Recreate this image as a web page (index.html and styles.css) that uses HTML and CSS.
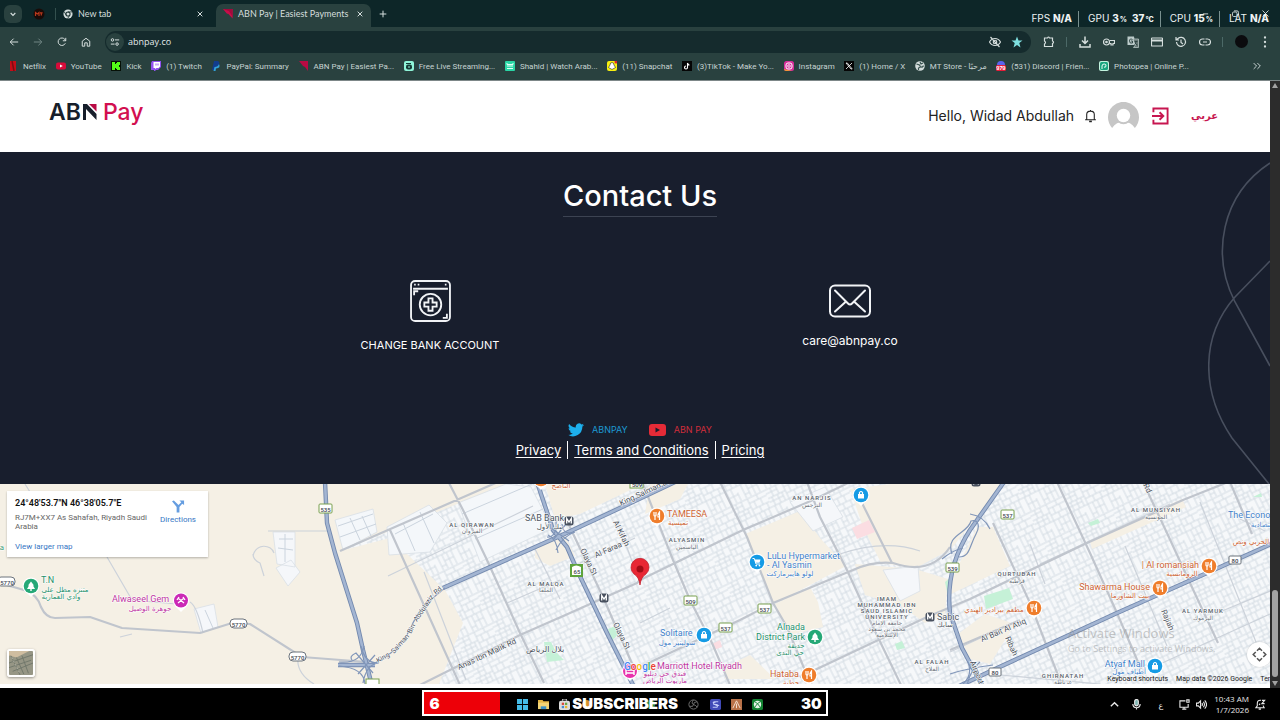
FILE: index.html
```html
<!DOCTYPE html>
<html lang="en">
<head>
<meta charset="utf-8">
<title>ABN Pay | Easiest Payments</title>
<meta name="viewport" content="width=device-width, initial-scale=1">
<link rel="stylesheet" href="styles.css">
</head>
<body>
<div class="browser">
  <div class="tabstrip">
    <button class="tab-search" aria-label="Search tabs"><svg class="ic" viewBox="0 0 24 24"><path d="M5 9l7 7 7-7" stroke-width="3.5"/></svg></button>
    <button class="pinned" aria-label="Pinned tab"><svg viewBox="0 0 12 12"><circle cx="6" cy="6" r="5.5" fill="#1a0b08"/><path d="M2.5 8V4.5L4.3 6 6 4.5V8M7 4.8h2.6M8.3 4.8V7.600" stroke="#b8391d" stroke-width="1.2" fill="none"/></svg></button>
    <div class="tab">
      <svg class="fav" viewBox="0 0 24 24"><circle cx="12" cy="12" r="11" fill="#d5dedd"/><circle cx="12" cy="12" r="5" fill="#d5dedd" stroke="#19302f" stroke-width="2.500"/><path d="M12 7h10M7.700 14.500L2.500 6M16.300 14.500L11 23" stroke="#19302f" stroke-width="2"/></svg>
      <span class="tab-title">New tab</span>
      <button class="tab-x" aria-label="Close tab"><svg class="ic" viewBox="0 0 24 24"><path d="M5 5l14 14M19 5L5 19" stroke-width="3"/></svg></button>
    </div>
    <div class="tab active">
      <svg class="fav" viewBox="0 0 24 24"><path d="M0 0h23v23L13 12 9 11z" fill="#c80d49"/><path d="M0 0l14 5 9 13V0z" fill="#a00a3c"/></svg>
      <span class="tab-title">ABN Pay | Easiest Payments</span>
      <button class="tab-x" aria-label="Close tab"><svg class="ic" viewBox="0 0 24 24"><path d="M5 5l14 14M19 5L5 19" stroke-width="3"/></svg></button>
    </div>
    <button class="new-tab" aria-label="New tab"><svg class="ic" viewBox="0 0 24 24"><path d="M12 2v20M2 12h20" stroke-width="3"/></svg></button>
    <div class="win-buttons">
      <button aria-label="Minimize"><svg class="ic" viewBox="0 0 24 24"><path d="M5 13h14"/></svg></button>
      <button aria-label="Restore"><svg class="ic" viewBox="0 0 24 24"><rect x="4" y="8" width="12" height="12" rx="3"/><path d="M8 5h8q4 0 4 4v7"/></svg></button>
      <button aria-label="Close"><svg class="ic" viewBox="0 0 24 24"><path d="M4 4l16 16M20 4L4 20"/></svg></button>
    </div>
    <div class="hud">
      <span>FPS <b>N/A</b></span><span>GPU <b>3<small>&thinsp;%</small></b> <b>&nbsp;37<small>&thinsp;°C</small></b></span><span>CPU <b>15<small>&thinsp;%</small></b></span><span>LAT <b>N/A</b></span>
    </div>
  </div>

  <div class="toolbar">
    <div class="nav-buttons">
      <button aria-label="Back"><svg class="ic" viewBox="0 0 24 24"><path d="M22 12H3M11 4l-8 8 8 8"/></svg></button>
      <button class="dim" aria-label="Forward"><svg class="ic" viewBox="0 0 24 24"><path d="M2 12h19M13 4l8 8-8 8"/></svg></button>
      <button aria-label="Reload"><svg class="ic" viewBox="0 0 24 24"><path d="M20 15a9 9 0 1 1-1-9l2 3M21 2v7h-7"/></svg></button>
      <button aria-label="Home"><svg class="ic" viewBox="0 0 24 24"><path d="M3 10l9-7 9 7v12h-6v-8H9v8H3z"/></svg></button>
    </div>
    <div class="address">
      <span class="site-info"><svg class="ic" viewBox="0 0 24 24"><circle cx="6" cy="7" r="3"/><path d="M12 7h10M2 17h9"/><circle cx="17" cy="17" r="3"/></svg></span>
      <input type="text" value="abnpay.co" aria-label="Address">
      <button aria-label="Tracking blocked"><svg class="ic" viewBox="0 0 24 24"><path d="M1 12q4-7 11-7t11 7q-4 7-11 7T1 12zM3 2l18 20"/><circle cx="12" cy="12" r="3.500"/></svg></button>
      <button aria-label="Bookmark"><svg viewBox="0 0 24 24"><path d="M12 1l3 8h8l-6.500 5 2.500 9-7-5-7 5 2.500-9L1 9h8z" fill="#7fe0e0"/></svg></button>
    </div>
    <div class="tool-buttons">
      <button aria-label="Extensions"><svg class="ic" viewBox="0 0 24 24"><path d="M3 4h6q2-4 4 0h6v6q4 2 0 5v6H3v-5q4-3 0-6z"/></svg></button>
      <i></i>
      <button aria-label="Downloads"><svg class="ic" viewBox="0 0 24 24"><path d="M12 1v14M6 9l6 6 6-6M2 16v6h20v-6" stroke-width="3"/></svg></button>
      <button aria-label="Passwords"><svg class="ic" viewBox="0 0 24 24"><circle cx="7" cy="12" r="6"/><circle cx="7" cy="12" r="1.500"/><path d="M13 9h10v6h-3v3h-4v-3h-3"/></svg></button>
      <button aria-label="Translate"><svg viewBox="0 0 24 24"><path d="M1 1h13l3 17H1z" fill="#bccbca"/><path d="M12 6h11v17H13l4-5z" fill="#657775" stroke="#bccbca" stroke-width="1.500"/><path d="M11 7q-6-3-6 3t6 4v-4H8M15 11h6M18 10q0 6-3 7M16 13q2 5 5 5" stroke="#29413f" stroke-width="1.800" fill="none"/></svg></button>
      <button aria-label="Payments"><svg class="ic" viewBox="0 0 24 24"><rect x="1" y="4" width="22" height="16" rx="1"/><path d="M1 9h22" stroke-width="4"/></svg></button>
      <button aria-label="History"><svg class="ic" viewBox="0 0 24 24"><path d="M3 12a9 9 0 1 0 3-7L2 8M2 2v6h6M12 7v6l4 3"/></svg></button>
      <button aria-label="Copy link"><svg class="ic" viewBox="0 0 24 24"><path d="M11 6H7a6 6 0 0 0 0 12h4M13 6h4a6 6 0 0 1 0 12h-4M8 12h8"/></svg></button>
      <i></i>
      <button aria-label="Profile"><span class="profile"></span></button>
      <button aria-label="Menu"><svg viewBox="0 0 24 24" fill="#d5dedd"><circle cx="12" cy="3" r="2.300"/><circle cx="12" cy="12" r="2.300"/><circle cx="12" cy="21" r="2.300"/></svg></button>
    </div>
  </div>

  <nav class="bookmarks" aria-label="Bookmarks">
    <div class="bookmark-list">
      <a href="#"><svg viewBox="0 0 10 10"><path d="M2 0h6v10H2z" fill="#c40d18"/><path d="M4 0l2 10" stroke="#7d0b12" stroke-width="1.500"/></svg>Netflix</a>
      <a href="#"><svg viewBox="0 0 10 10"><rect y="1.500" width="10" height="7" rx="2" fill="#d80b3a"/><path d="M4 3.500L6.800 5 4 6.500z" fill="#fff"/></svg>YouTube</a>
      <a href="#"><svg viewBox="0 0 10 10"><path d="M0 0h10v10H0z" fill="#061007"/><path d="M1 1h3v2h1V2h1V1h3v3H8v2h1v3H6V8H5V7H4v2H1z" fill="#53fc18"/></svg>Kick</a>
      <a href="#"><svg viewBox="0 0 10 10"><path d="M1 0h9v6L7 9H5l-1 1H3V9H0V2z" fill="#9250ef"/><path d="M2.500 1H9v4.500L7.500 7H5.500L4 8V7H2.500z" fill="#fff"/><path d="M5 2.500v2M7 2.500v2" stroke="#9250ef"/></svg>(1) Twitch</a>
      <a href="#"><svg viewBox="0 0 10 10"><path d="M3 0h4q2 1 1 4Q7 6 4 6L3.500 9H1z" fill="#123d8f"/><path d="M8 3q2 4-3 4.500L4.500 10H2.500L3.500 6Q7 6 8 3z" fill="#31a1dc"/></svg>PayPal: Summary</a>
      <a href="#"><svg viewBox="0 0 10 10"><path d="M0 0h9v10L6 6 4 5z" fill="#b80b43"/></svg>ABN Pay | Easiest Pa...</a>
      <a href="#"><svg viewBox="0 0 10 10"><rect width="10" height="10" rx="2" fill="#8ff5d9"/><rect x="2" y="3.500" width="6" height="5" rx="2" fill="#153a35"/><path d="M2 2.500h5M4 5.500h3" stroke="#153a35"/><path d="M4 6h2" stroke="#8ff5d9"/></svg>Free Live Streaming...</a>
      <a href="#"><svg viewBox="0 0 10 10"><rect width="10" height="10" rx="1" fill="#29d5a5"/><path d="M2 2v1.500h6V2M2 5h6M2 7.500h6" stroke="#e3fff7" fill="none"/></svg>Shahid | Watch Arab...</a>
      <a href="#"><svg viewBox="0 0 10 10"><rect width="10" height="10" rx="2" fill="#f8ef10"/><path d="M5 1.500q2 0 2 2.500l1.500 2.500L5 8.500 1.500 6.500 3 4q0-2.500 2-2.500z" fill="#fff" stroke="#222" stroke-width=".6"/><circle cx="9" cy="1" r="1.500" fill="#e3222b"/></svg>(11) Snapchat</a>
      <a href="#"><svg viewBox="0 0 10 10"><path d="M0 0h10v10H0z" fill="#050505"/><path d="M5.500 2v4.500a1.500 1.500 0 1 1-1.500-1.500M5.500 2q.5 2 2 2" stroke="#fff" stroke-width="1.100" fill="none"/></svg>(3)TikTok - Make Yo...</a>
      <a href="#"><svg viewBox="0 0 10 10"><rect width="10" height="10" rx="2.500" fill="#d62f9b"/><path d="M0 8l8 2H2q-2 0-2-2z" fill="#f49835"/><rect x="2" y="2" width="6" height="6" rx="2" fill="none" stroke="#fff"/><circle cx="5" cy="5" r="1.300" fill="none" stroke="#fff" stroke-width=".8"/></svg>Instagram</a>
      <a href="#"><svg viewBox="0 0 10 10"><path d="M0 0h10v10H0z" fill="#050505"/><path d="M2 2l5 6h1.200L3.300 2zM8 2L2 8" stroke="#fff" stroke-width=".8" fill="none"/></svg>(1) Home / X</a>
      <a href="#"><svg viewBox="0 0 10 10"><circle cx="5" cy="5" r="4.800" fill="#d3dcdb"/><path d="M1.500 3l3 1 1 2-2 1v2M5 1l1 2 2-1M9 5L7 5.500V7" stroke="#395350" stroke-width="1.200" fill="none"/></svg>MT Store - مرحبًا</a>
      <a href="#"><svg viewBox="0 0 10 10"><circle cx="5" cy="4" r="4" fill="#5963ed"/><rect y="4" width="10" height="6" rx="1.500" fill="#e51c38"/><text x="5" y="9" class="badge-number">979</text></svg>(531) Discord | Frien...</a>
      <a href="#"><svg viewBox="0 0 10 10"><rect width="10" height="10" rx="2" fill="#c2f4df"/><rect x="1" y="1" width="8" height="8" rx="1.500" fill="#18a47e"/><path d="M3 8V5q0-2 2.200-2T7 5 5 6" stroke="#effff9" fill="none"/></svg>Photopea | Online P...</a>
    </div>
    <button aria-label="More bookmarks"><svg class="ic" viewBox="0 0 24 24"><path d="M4 5l7 7-7 7M13 5l7 7-7 7"/></svg></button>
  </nav>
</div>

<div class="page">
  <header class="site-header">
    <a class="logo" href="#" aria-label="ABN Pay"><span class="logo-dark">AB</span><span class="logo-n"><svg viewBox="0 0 14 16"><path d="M0 0h4l9.500 10v6L3 5v11H0z" fill="#171e2b"/><path d="M6 0h7.500v7.500z" fill="#b90b45"/></svg></span><span class="logo-pink">Pay</span></a>
    <div class="account">
      <span>Hello, Widad Abdullah</span>
      <button class="bell" aria-label="Notifications"><svg viewBox="0 0 24 24" fill="none" stroke="#222" stroke-width="2"><path d="M2 19h20M5 18V9q0-6 7-6t7 6v9M12 1v2"/><path d="M9.500 22h5" stroke-width="3"/></svg></button>
      <svg class="avatar" viewBox="0 0 30 27" aria-label="Avatar"><path d="M4 25A15 15 0 1 1 26 25Q22 19 15 19T4 25z" fill="#c6c6c6"/><circle cx="15" cy="14" r="7.500" fill="#c6c6c6"/><circle cx="15" cy="13" r="6.500" fill="#fff"/></svg>
      <button class="logout" aria-label="Log out"><svg viewBox="0 0 18 18" fill="none" stroke="#c71650" stroke-width="2"><path d="M1.500 5V1h15v16h-15v-4M0 9h11.500M8 5l4 4-4 4"/></svg></button>
      <a class="lang" href="#" lang="ar">عربي</a>
    </div>
  </header>

  <main>
    <section class="contact">
      <svg class="curves" viewBox="0 0 72 332" preserveAspectRatio="none" fill="none" stroke="#484f5e" stroke-width="1.600"><path d="M62 11C13 43 3 103 27 150L62 214M62 109L27 145C-8 185-7 240 24 286L61 332"/></svg>
      <h1>Contact Us</h1>
      <div class="contact-options">
        <a class="option bank" href="#">
          <svg class="bank-icon" viewBox="0 0 40 41" fill="none" stroke="#f1f3f6" stroke-width="1.800"><rect x="1" y="1" width="38" height="39" rx="4"/><path d="M3 8.500h34M4 15v-4h4M36 33v4h-4"/><circle cx="20" cy="24" r="10.500"/><path d="M18 18h4v4h4v4h-4v4h-4v-4h-4v-4h4z"/><path d="M4 4.500h1.600M7.500 4.500h1.600M34 4.500h1.600" stroke-width="1.800"/></svg>
          <span>CHANGE BANK ACCOUNT</span>
        </a>
        <a class="option" href="#">
          <svg class="mail-icon" viewBox="0 0 42 33" fill="none" stroke="#f1f3f6" stroke-width="2" stroke-linecap="round"><rect x="1" y="1" width="40" height="31" rx="5"/><path d="M6 6l13 13q2 2 4 0L36 6M6 27l11-10M36 27L25 17"/></svg>
          <span>care@abnpay.co</span>
        </a>
      </div>
      <div class="social">
        <a class="twitter" href="#"><svg viewBox="0 0 24 20"><path d="M24 2.400a9 9 0 0 1-2.800.8A5 5 0 0 0 23.300.5a10 10 0 0 1-3.100 1.200 4.900 4.900 0 0 0-8.400 4.500A14 14 0 0 1 1.700 1a4.900 4.900 0 0 0 1.500 6.600A5 5 0 0 1 1 7a4.900 4.900 0 0 0 4 4.800 5 5 0 0 1-2.300.1 4.900 4.900 0 0 0 4.600 3.400A10 10 0 0 1 0 17.300 14 14 0 0 0 21.500 4.900 10 10 0 0 0 24 2.400z" fill="#1dafec"/></svg>ABNPAY</a>
        <a class="youtube" href="#"><svg viewBox="0 0 17 12"><rect width="17" height="12" rx="3" fill="#e52b37"/><path d="M6.500 3.500L11 6 6.500 8.500z" fill="#181e2d"/></svg>ABN PAY</a>
      </div>
      <div class="legal"><a href="#">Privacy</a><a href="#">Terms and Conditions</a><a href="#">Pricing</a></div>
    </section>

    <section class="map" aria-label="Map">
      <svg class="map-canvas" viewBox="0 0 1280 200" preserveAspectRatio="xMidYMid slice">
        <defs>
          <pattern id="blocks" width="38" height="34" patternUnits="userSpaceOnUse" patternTransform="rotate(-26)">
            <path d="M0 1h38M0 10h19M19 6h19M19 13h19M0 19h38M3 19v15M8 19v15M13 25v9M3 27h10M19 1v33M24 19v15M29 19v15M34 19v15M24 26h10M6 1v9M12 1v9M4 10v9M10 10v9M15 10v9M24 6v7M29 1v5M31 6v7M35 13v6M27 13v6M0 5h12M0 14h15M19 30h5" fill="none" stroke="#d0d9e1" stroke-width=".9"/>
          </pattern>
          <symbol id="food" viewBox="-9 -9 18 21"><path d="M0 11L-5 6h10z" fill="#fff"/><circle r="8.500" fill="#fff"/><circle r="7.300" fill="#ef7d2b"/><path d="M-3-4v3q0 1 1 1v4M-1-4v3q0 1-1 1M2.500 4v-8q-2 2-1.500 5h1.500" stroke="#fff" stroke-width="1.200" fill="none"/></symbol>
          <symbol id="shop" viewBox="-9 -9 18 21"><path d="M0 11L-5 6h10z" fill="#fff"/><circle r="8.500" fill="#fff"/><circle r="7.300" fill="#159be5"/><path d="M-3-1h6v4.500h-6z" fill="#fff"/><path d="M-1.500-1v-1.500q1.500-2 3 0V-1" stroke="#fff" stroke-width="1.200" fill="none"/></symbol>
          <symbol id="cart" viewBox="-9 -9 18 21"><path d="M0 11L-5 6h10z" fill="#fff"/><circle r="8.500" fill="#fff"/><circle r="7.300" fill="#159be5"/><path d="M-2.500-2.500h6L2.500.8h-4z" fill="#fff"/><path d="M-4.500-3.500h1.800L-1 2h4" stroke="#fff" fill="none"/><circle cx="-.8" cy="3.600" r=".9" fill="#fff"/><circle cx="2.500" cy="3.600" r=".9" fill="#fff"/></symbol>
          <symbol id="park" viewBox="-9 -9 18 21"><path d="M0 11L-5 6h10z" fill="#fff"/><circle r="8.500" fill="#fff"/><circle r="7.300" fill="#25a877"/><path d="M0-4.500L3-.5H2l2 3.500H.7v2H-.7V3H-4l2-3.500h-1z" fill="#fff"/></symbol>
          <symbol id="metro" viewBox="-5 -5 10 10"><rect x="-4.500" y="-4.500" width="9" height="9" rx="2.500" fill="#49515f"/><path d="M-2.300 2.500v-5L0 1l2.300-3.500v5" fill="none" stroke="#fff" stroke-width="1.300"/></symbol>
        </defs>
        <rect width="1280" height="200" fill="#f6f8fa"/>
        <rect x="330" width="950" height="200" fill="url(#blocks)"/>
        <g fill="#f5f0e5">
          <path d="M0 0h507L340 67l50-13 55 52 18 33-24 61H0z"/>
          <path d="M0 0h322l5 60 38 140H0z"/>
          <path d="M545 0h98L580 30l-25 5zM535 62l30-10 10 20-25 10-15-8z"/>
          <path d="M745 50l55-23 20 27 26 28-72 38-20-48z"/>
          <path d="M850 5l40-5h113l-52 65-35 19-35-5-18-36z"/>
          <path d="M855 80l60 5 33 10-3 35-20 9-25-18-35-10z"/>
          <path d="M775 120l35-17 8 15 5 25-34 8zM725 183l25-12 25 24H725zM952 95l25-52 16 0 17 39-59 28zM985 130l30 10-25 40-20-5-12-25z"/>
          <path d="M1090 57l92-42 4 8-94 42zM650 0h38l-8 15-35 15z"/>
        </g>
        <g fill="#f5f7fa" stroke="#d9dfe6" stroke-width=".8">
          <path d="M335 36l38-11 4 23-34 18zM387 43l42-22 18 18-17 29-41 3zM458 19l48-19 25 3 21 41-72 34z" fill="#f4f7fa"/>
          <path d="M273 48h22v35l-18-3zM276 84l15-8 9 12-12 14zM194 125l20-5 4 23-17 6z"/>
          <path d="M883 86l35-4 2 25-20 10zM790 18l35-15 18 30-30 14z"/>
        </g>
        <path d="M338 42l35-12M350 34l10 22M362 32l9 20M340 53l36-13M395 50l38-20M403 39l12 28M420 28l14 31M279 55h14M278 64l15 2M285 50v28M462 30l70-30M475 55l68-30M205 126l8 18" fill="none" stroke="#cbd4de"/>
        <g fill="#c5f1d7"><path d="M984 112l25-8 4 11-27 10z"/><path d="M608 145l7-3 3 9-7 6zM544 158l7 0 5 10 8 8-17 2zM895 160l7-3 3 7-8 2zM945 98l6-5-2 24zM1088 39l10-4 2 4-9 3zM1253 13l8-4 1 4z"/></g>
        <path d="M852 44l17-8 6 12-18 7zM712 160l8-4 2 7-8 3z" fill="#fbdde2"/>

        <g class="road minor">
          <path d="M25 0l5 8M107 73l25 43 55 5M190 118q7 4 13 31M268 47h62M253 72c3-13 18-12 21-3M264 92l-4-13q-7-3-7-9M298 173q-2 16 16 27M132 150l-12 3"/>
          <path d="M388 92l145-70M424 88l42 108M507 119l53-23M535 65l25 50M640 139l30-15M840 70q45-15 80-3M1020 136l-70 32M1160 180l110-50M1125 62l42 100M1200 18l60 150M990 190l110 10"/>
          <path d="M580 79l55-25M620 45l15 40M1040 80l130-60M1030 60l15 40M1215 130l60-25M1240 35l25 12"/>
        </g>
        <g class="road medium">
          <path d="M0 99l24 7q13 4 17 17 5 11 14 11l35-1 32 11 78 5 32-10 18 1 52 33 65 5"/>
          <path d="M340 67L507-6M390 46l70 155M447-5l16 31 24 50 33 73 24 50M568 39l35 74 30 69M420 201l100-50 50-22 67-30 3-3 103-50 70-30L850-2M643 0l30 76 17 40 22 43 18 42M720-2l27 55 26 66 14 24 24 58M640 183l100-47 33-17 80-33q20-9 40-7 38 13 57-16M807-2l13 35 27 53 26 57 28 58M855 5l37 74M800 193l127-60 43-18 117-56 96-43 45-18M993 39l37 80 31 80M1057-2l33 71 27 60 24 56M1143-2l24 51 23 50 28 60M1230-2l22 52M950 166l70-30"/>
        </g>
        <g class="road major-edge"><path d="M325-2l2 41 8 30 22 70 6 27 9 36M443 104l117-52 60-28 55-26M537-2l16 48 14 17 10 23 30 63 27 54M1004-2L970 46q-25 39-20 83l12 35 21 39M955 204l38-18 124-57 90-40 73-33M338 181h37"/></g>
        <g class="road major"><path d="M325-2l2 41 8 30 22 70 6 27 9 36M443 104l117-52 60-28 55-26M537-2l16 48 14 17 10 23 30 63 27 54M1004-2L970 46q-25 39-20 83l12 35 21 39M955 204l38-18 124-57 90-40 73-33M338 181h37"/></g>
        <g class="interchange"><path d="M375 179Q400 166 409 147T424 122 445 104M339 178q22 2 25-16M339 182q25 2 26 18M361 162q4 18 18 17M363 199q3-18 15-20M352 176q-3-4 4-7l17 20M358 190l17-19M547 53q10 1 9-17M548 51q9 4 10 18M562 40q1 12 13 8M556 66q7-14 19-18M553 56l13-16M551 44l18 13M952 70c-7-20 16-20 19-33 8-2 9 6 5 13-7 13-6 23-17 23M970 30q14 2 20 15M942 75q11-9 21-11M968 178q5 13-5 22M980 178q-9 7-13 23M950 190q18-6 43-9"/></g>

        <g class="shield">
          <g fill="#fff" stroke="#79a04f"><rect x="319" y="20" width="13" height="9" rx="1"/><rect x="684" y="112" width="13" height="9" rx="1"/><rect x="758" y="120" width="13" height="9" rx="1"/><rect x="719" y="139" width="13" height="9" rx="1"/><rect x="946" y="79" width="13" height="9" rx="1"/><rect x="1001" y="26" width="13" height="9" rx="1"/><rect x="366" y="195" width="13" height="9"/><rect x="630" y="-5" width="13" height="9"/></g>
          <rect x="570" y="80" width="13" height="13" fill="#5ea33c"/><path d="M572 83q4-3 9 0v8h-9z" fill="#fff"/>
          <g fill="#fff" stroke="#6c747d"><rect x="-3" y="93" width="18" height="9" rx="4"/><rect x="230" y="135" width="17" height="9" rx="4"/><rect x="289" y="168" width="17" height="9" rx="4"/><rect x="1229" y="72" width="12" height="8" rx="1"/><rect x="989" y="184" width="12" height="8" rx="1"/></g>
          <text x="325.500" y="28">535</text><text x="690.500" y="120">509</text><text x="764.500" y="128">537</text><text x="725.500" y="147">537</text><text x="952.500" y="87">539</text><text x="1007.500" y="34">537</text><text x="577" y="90">65</text><text x="7" y="101">5770</text><text x="238.500" y="143">5770</text><text x="297.500" y="176">5770</text><text x="1235" y="79">80</text><text x="995" y="191">80</text><text x="637" y="3">509</text>
        </g>

        <g class="district">
          <text x="472" y="43">AL QIRAWAN</text><text x="546" y="102">AL MALQA</text><text x="687" y="58">ALYASMIN</text><text x="812" y="16">AN NARJIS</text><text x="1017" y="92">QURTUBAH</text><text x="1156" y="28">AL MUNSIYAH</text><text x="1203" y="129">AL YARMUK</text><text x="932" y="180">AL FALAH</text><text x="1063" y="194">GHIRNATAH</text>
          <text x="887" y="117">IMAM</text><text x="887" y="123">MUHAMMAD IBN</text><text x="887" y="129">SAUD ISLAMIC</text><text x="887" y="135">UNIVERSITY</text>
        </g>
        <g class="district-ar" lang="ar">
          <text x="472" y="49">القيروان</text><text x="546" y="108">الملقا</text><text x="687" y="65">الياسمين</text><text x="812" y="23">النرجس</text><text x="1017" y="99">قرطبة</text><text x="1156" y="35">المونسية</text><text x="1203" y="136">اليرموك</text><text x="932" y="187">الفلاح</text><text x="1063" y="200">غرناطة</text><text x="887" y="141">جامعة الإمام</text><text x="887" y="147">محمد بن سعود</text><text x="887" y="153">الإسلامية</text>
        </g>
        <g class="street bend">
          <text transform="translate(378 179) rotate(-30)">King</text><text transform="translate(394 170) rotate(-48)">Salman</text><text transform="translate(411 150) rotate(-62)">Bin</text><text transform="translate(417 138) rotate(-56)">Abdulaziz</text><text transform="translate(436 111) rotate(-40)">Rd</text>
        </g>
        <g class="street">
          <text transform="translate(459 186) rotate(-25)">Anas Ibn Malik Rd</text><text transform="translate(596 74) rotate(-24)">Al Faraa</text><text transform="translate(613 38) rotate(64)">Al Kifah</text><text transform="translate(580 66) rotate(64)">Olaya St</text><text transform="translate(613 140) rotate(64)">Olaya St</text><text transform="translate(621 22) rotate(-25)">King Salman Bin Abdulaziz</text><text transform="translate(982 158) rotate(-23)">Al Bait Al Atiq</text><text transform="translate(1005 154) rotate(66)">Ribah</text><text transform="translate(1161 127) rotate(67)">Rajiah</text><text transform="translate(970 178) rotate(68)">Airport Rd</text><text transform="translate(1143 1) rotate(64)">Rd</text><text x="526" y="168">بلال الرياض</text>
        </g>
        <use href="#metro" x="564" y="32" width="10" height="10"/><use href="#metro" x="599" y="109" width="10" height="10"/><use href="#metro" x="925" y="128" width="10" height="10"/><use href="#metro" x="971" y="-7" width="10" height="10"/>
        <use href="#food" x="532" y="-14" width="18" height="21"/><use href="#food" x="648" y="23" width="18" height="21"/><use href="#food" x="1200" y="73" width="18" height="21"/><use href="#food" x="1151" y="95" width="18" height="21"/><use href="#food" x="1025" y="115" width="18" height="21"/><use href="#food" x="800" y="182" width="18" height="21"/>
        <use href="#shop" x="852" y="2" width="18" height="21"/><use href="#cart" x="748" y="69" width="18" height="21"/><use href="#shop" x="695" y="142" width="18" height="21"/><use href="#shop" x="1146" y="173" width="18" height="21"/>
        <use href="#park" x="22" y="93" width="18" height="21"/><use href="#park" x="806" y="144" width="18" height="21"/>
        <g><path d="M181 128l-5-5h10z" fill="#fff"/><circle cx="181" cy="116.500" r="8" fill="#fff"/><circle cx="181" cy="116.500" r="7" fill="#cb29b6"/><path d="M178 114l6 5M184 114l-6 5M177 116l2-3M185 116l-2-3" stroke="#fff" stroke-width="1.300"/><path d="M630 197l-5-5h10z" fill="#fff"/><circle cx="630" cy="187" r="8" fill="#fff"/><circle cx="630" cy="187" r="7" fill="#e831ac"/><path d="M626 184v7M626 189h8v2M628 186h6v3" stroke="#fff" stroke-width="1.400" fill="none"/></g>
        <g class="poi">
          <text class="green" x="41" y="99">T.N</text><text class="pink" x="112" y="118">Alwaseel Gem</text><text class="dark" x="525" y="37">SAB Bank</text><text class="orange" x="667" y="33">TAMEESA</text><text class="blue" x="767" y="75">LuLu Hypermarket</text><text class="blue" x="767" y="84">- Al Yasmin</text><text class="blue" x="660" y="152">Solitaire</text><text class="green end" x="805" y="146">Alnada</text><text class="green end" x="805" y="156">District Park</text><text class="orange end" x="799" y="193">Hataba</text><text class="pink" x="657" y="185">Marriott Hotel Riyadh</text><text class="orange end" x="1199" y="84">| Al romansiah</text><text class="orange end" x="1150" y="106">Shawarma House</text><text class="dark" x="937" y="136">Sabic</text><text class="blue end" x="1145" y="183">Atyaf Mall</text><text class="blue" x="1228" y="34">The Economist</text>
        </g>
        <g class="poi-ar" lang="ar">
          <text class="green" x="65" y="108">متنزه مطل على</text><text class="green" x="61" y="115">وادي العمارية</text><text class="pink" x="150" y="127">جوهرة الوصيل</text><text class="dark" x="550" y="45">بنك الأول</text><text class="orange" x="678" y="41">تميسية</text><text class="blue" x="790" y="92">لولو هايبرماركت</text><text class="blue" x="677" y="161">سوليتير مول</text><text class="green" x="796" y="164">حديقة</text><text class="green" x="790" y="171">حي الندى</text><text class="orange" x="791" y="201">حطبة</text><text class="pink" x="665" y="192">فندق حي دبليو</text><text class="pink" x="665" y="199">ماريوت الرياض</text><text class="orange" x="1182" y="92">الرومانسية</text><text class="orange" x="1130" y="114">بيت الشاورما</text><text class="orange" x="994" y="128">مطعم بيرادير الهندي</text><text class="dark" x="945" y="143">سابك</text><text class="blue" x="1129" y="190">أطياف مول</text><text class="orange" x="1251" y="60">الحربي ونص</text><text class="blue" x="1265" y="43">الاقتصادية</text><text class="orange" x="561" y="4">الناصح</text><text class="green" x="2" y="66">a</text>
        </g>
        <path d="M640 101q-1-8-6-11a9 9 0 1 1 12 0q-5 3-6 11z" fill="#e82734" stroke="#bd1a26" stroke-width=".7"/><circle cx="640" cy="85" r="3.500" fill="#a10d16"/>
        <text class="google" x="624" y="186"><tspan fill="#4285f4">G</tspan><tspan fill="#ea4335">o</tspan><tspan fill="#fbbc04">o</tspan><tspan fill="#4285f4">g</tspan><tspan fill="#34a853">l</tspan><tspan fill="#ea4335">e</tspan></text>
      </svg>

      <div class="map-card">
        <div class="place">
          <h2>24°48'53.7"N 46°38'05.7"E</h2>
          <p>RJ7M+XX7 As Sahafah, Riyadh Saudi Arabia</p>
          <a href="#">View larger map</a>
        </div>
        <a class="directions" href="#"><svg viewBox="0 0 14 14"><path d="M5 14V8L0 2l2-1 5 5 3-3-2-2h5v5l-2-1.500L8 8v6z" fill="#659de0"/></svg>Directions</a>
      </div>
      <button class="satellite" aria-label="Satellite view"><svg viewBox="0 0 26 26"><path d="M0 0h26v26H0z" fill="#969685"/><path d="M0 0h22L8 7 0 5z" fill="#cfbda0"/><path d="M2 5l10 21M0 13l26-9M4 22l22-9M14 5l7 19M8 7l8 18M0 18l24-8" stroke="#70766a" fill="none"/><path d="M3 7l9 18" stroke="#b5b5a8" stroke-dasharray="2 2"/></svg></button>
      <button class="pan" aria-label="Map camera controls"><svg class="ic" viewBox="0 0 24 24"><path d="M8 6l4-4 4 4M8 18l4 4 4-4M6 8l-4 4 4 4M18 8l4 4-4 4" stroke-width="2.500"/></svg></button>
      <div class="map-credits"><button>Keyboard shortcuts</button><span>Map data ©2026 Google</span><a href="#">Terms</a></div>
      <div class="watermark"><span>Activate Windows</span><small>Go to Settings to activate Windows.</small></div>
    </section>
  </main>
  <div class="scrollbar" aria-hidden="true"><svg viewBox="0 0 10 10"><path d="M5 2l3 5H2z"/></svg><span></span><svg viewBox="0 0 10 10"><path d="M5 8L2 3h6z"/></svg></div>
</div>

<footer class="taskbar">
  <div class="apps">
    <svg viewBox="0 0 12 12"><path d="M0 0h5.500v5.500H0zM6.500 0H12v5.500H6.500zM0 6.500h5.500V12H0zM6.500 6.500H12V12H6.500z" fill="#45bce8"/></svg>
    <svg viewBox="0 0 12 12"><path d="M0 1h5l1 1.500h6V11H0z" fill="#e6b744"/><path d="M0 4h12v7H0z" fill="#f4d576"/><path d="M3 8h6v3H3z" fill="#3c91c8"/></svg>
    <svg viewBox="0 0 12 12"><rect y="2" width="12" height="10" rx="2" fill="#ddd"/><path d="M4 2V0h4v2" stroke="#ddd" fill="none"/><path d="M3 4h2.500v2.500H3z" fill="#d94738"/><path d="M6.500 4H9v2.500H6.500z" fill="#6aa840"/><path d="M3 7.500h2.500V10H3z" fill="#458bd0"/><path d="M6.500 7.500H9V10H6.500z" fill="#e8b72d"/></svg>
    <svg viewBox="0 0 12 12"><circle cx="6" cy="6" r="5" fill="#d9902b"/></svg>
    <svg viewBox="0 0 12 12"></svg><svg viewBox="0 0 12 12"></svg>
    <svg viewBox="0 0 12 12"><circle cx="6" cy="6" r="5" fill="#26813e"/></svg><svg viewBox="0 0 12 12"></svg>
    <svg viewBox="0 0 12 12" fill="none" stroke="#777"><circle cx="6" cy="6" r="5"/><path d="M6 1q-3 4 0 5t4 3M2 8q4 1 4-2t4-3"/></svg>
    <svg viewBox="0 0 12 12"><rect width="12" height="12" rx="2" fill="#4049b7"/><path d="M9 3H4v3h4v3H3M3 4h3M6 7h4" stroke="#cdd4ff" fill="none"/></svg>
    <svg viewBox="0 0 12 12"><path d="M0 0h12v12H0z" fill="#b97148"/><path d="M2 10l4-8 4 8M6 5v5" stroke="#f7e5d8" fill="none"/></svg>
    <svg viewBox="0 0 12 12"><rect width="12" height="12" rx="2" fill="#138332"/><circle cx="6" cy="6" r="4" fill="#e6f4e8"/><path d="M3 3q3 1 6 6M9 3Q6 4 3 9" stroke="#138332" fill="none"/></svg>
  </div>
  <div class="goal"><span class="goal-current">6</span><span class="goal-label">SUBSCRIBERS</span><span class="goal-target">30</span></div>
  <div class="tray">
    <button class="more" aria-label="Hidden icons"><svg class="ic" viewBox="0 0 24 24"><path d="M4 16l8-8 8 8" stroke-width="3"/></svg></button>
    <button aria-label="Microphone"><svg class="ic" viewBox="0 0 24 24"><rect x="8" y="1" width="8" height="14" rx="4" fill="#7fb5b2"/><path d="M4 11q0 8 8 8t8-8M12 19v4"/></svg></button>
    <button class="ime" aria-label="Input language">ع</button>
    <button aria-label="Display"><svg class="ic" viewBox="0 0 24 24"><path d="M14 4H2v14h18v-7M7 22h9M11 18v4M17 2h5v5h-5z"/></svg></button>
    <button aria-label="Volume"><svg class="ic" viewBox="0 0 24 24"><path d="M1 9h4l5-5v16l-5-5H1zM13 9q2 3 0 6M16 6q5 6 0 12M19 3q8 9 0 18"/></svg></button>
    <time>10:43 AM<br>1/7/2026</time>
    <button aria-label="Notifications"><svg class="ic" viewBox="0 0 24 24"><path d="M13 3q-8-1-8 7v5l-3 4h18l-2-4v-1M8 22h5M15 3h6l-6 7h6M9 13l2-3"/></svg></button>
  </div>
</footer>
</body>
</html>
```

FILE: styles.css
```css
* { box-sizing: border-box; }
body {
  margin: 0;
  min-height: 100vh;
  display: flex;
  flex-direction: column;
  background: #000;
  font-family: Inter, "DejaVu Sans", sans-serif;
  overflow-x: hidden;
}
button { border: 0; padding: 0; background: none; color: inherit; font: inherit; display: flex; align-items: center; justify-content: center; }
a { color: inherit; text-decoration: none; }
svg { display: block; flex: none; }
.ic { fill: none; stroke: currentColor; stroke-width: 2.4; }

/* browser window */
.browser { color: #d5dedd; background: #29413f; font-family: Lato, "DejaVu Sans", sans-serif; font-size: 9px; border-bottom: 1px solid #7d8788; }
.tabstrip { position: relative; display: flex; align-items: center; height: 27px; padding-left: 4px; background: #0d2628; }
.tab-search { width: 18px; height: 18px; border-radius: 6px; background: #29413f; }
.tab-search svg { width: 8px; height: 8px; }
.pinned { width: 34px; height: 12px; border-right: 1px solid #34504e; }
.pinned svg { width: 12px; height: 12px; }
.tab { display: flex; align-items: center; gap: 5px; width: 155px; height: 23px; padding: 0 7px; }
.fav { width: 10px; height: 10px; }
.tab-title { flex: 1; white-space: nowrap; }
.tab-x svg { width: 8px; height: 8px; }
.tab.active { margin-left: 5px; align-self: flex-end; padding-bottom: 4px; border-radius: 7px 7px 0 0; background: #29413f; }
.new-tab { width: 24px; }
.new-tab svg { width: 8px; height: 8px; }
.win-buttons { display: flex; margin-left: auto; }
.win-buttons button { width: 30px; height: 26px; }
.win-buttons svg { width: 9px; height: 9px; }
.hud { position: absolute; top: 11px; right: 11px; display: flex; font: 10px/14px Inter, sans-serif; color: #eef3f3; white-space: nowrap; }
.hud span { padding: 0 6px 0 9px; border-right: 1px solid #79908f; }
.hud span:last-child { padding-right: 0; border-right: 0; }
.hud b { font-weight: 800; }
.hud small { font-size: 7px; }

.toolbar { display: flex; align-items: center; height: 29px; padding: 0 3px 0 2px; }
.toolbar button { width: 24px; height: 22px; flex: none; }
.toolbar button svg { width: 12px; height: 12px; }
.toolbar .nav-buttons svg { width: 10px; height: 10px; }
.nav-buttons, .tool-buttons { display: flex; align-items: center; }
.dim { color: #718684; }
.address { flex: 1; display: flex; align-items: center; height: 22px; margin: 0 6px 0 7px; padding: 0 4px 0 1px; border-radius: 11px; background: #152b2d; }
.site-info { display: grid; place-items: center; width: 18px; height: 18px; border-radius: 50%; background: #29413f; }
.site-info svg { width: 10px; height: 10px; }
.address input { flex: 1; min-width: 0; border: 0; outline: 0; padding: 0 4px; background: none; color: #e3eaea; font: 9px "Open Sans", sans-serif; }
.address button:last-child { width: 20px; }
.tool-buttons i { width: 1px; height: 10px; margin: 0 6px 0 5px; background: #4c6967; }
.profile { width: 13px; height: 13px; border-radius: 50%; background: #0b0b0e; }

.bookmarks { display: flex; justify-content: space-between; height: 24px; padding: 0 18px 4px 8px; align-items: center; font-family: Roboto, "DejaVu Sans", sans-serif; font-size: 8px; color: #c7d3d2; }
.bookmark-list { flex: 1; max-width: 1181px; display: flex; justify-content: space-between; }
.bookmark-list a { display: flex; align-items: center; gap: 5px; white-space: nowrap; }
.bookmark-list svg { width: 10px; height: 10px; }
.badge-number { font: 700 5px Inter, sans-serif; fill: #fff; text-anchor: middle; }
.bookmarks button svg { width: 10px; height: 10px; }

/* site */
.page { position: relative; flex: 1; display: flex; flex-direction: column; padding-bottom: 4px; background: #fff; }
.site-header { display: flex; align-items: center; justify-content: space-between; height: 71px; padding: 0 62px 2px 49px; background: #fff; }
.logo { display: flex; align-items: baseline; font-size: 23px; line-height: 32px; margin-bottom: 8px; }
.logo-dark { color: #171e2b; font-weight: 600; }
.logo-n { margin-left: 2px; }
.logo-n svg { width: 14px; height: 16px; }
.logo-pink { margin-left: 6px; color: #d20f50; font-weight: 500; }
.account { display: flex; align-items: center; color: #222; font-size: 14px; white-space: nowrap; }
.bell { margin: 0 11px 0 10px; }
.bell svg { width: 13px; height: 14px; }
.avatar { width: 31px; height: 28px; }
.logout { margin: 0 22px 0 13px; }
.logout svg { width: 17px; height: 18px; }
.lang { color: #c71650; font: 700 10px "DejaVu Sans", sans-serif; }
main { flex: 1; display: flex; flex-direction: column; }

.contact { position: relative; flex: 1; display: flex; flex-direction: column; align-items: center; padding: 24px 20px 20px; background: #181e2d; color: #fff; }
.curves { position: absolute; top: 0; right: 0; width: 72px; height: 100%; }
.contact h1 { margin: 0 0 63px; border-bottom: 1px solid #3c4352; font-size: 29px; line-height: 40px; font-weight: 500; }
.contact-options { width: 100%; max-width: 840px; display: grid; grid-template-columns: 1fr 1fr; align-items: center; }
.option { display: flex; flex-direction: column; align-items: center; gap: 14px; font-size: 12px; line-height: 18px; }
.bank { font-size: 11px; }
.bank-icon { width: 41px; height: 42px; }
.mail-icon { width: 42px; height: 34px; }
.social { display: flex; gap: 21px; margin-top: auto; font-size: 9px; line-height: 16px; }
.social a { display: flex; align-items: center; gap: 8px; }
.twitter { color: #1d99d2; }
.twitter svg { width: 16px; height: 14px; }
.youtube { color: #cf2d3b; }
.youtube svg { width: 17px; height: 12px; }
.legal { display: flex; padding: 3px 0 5px; font-size: 13px; line-height: 18px; }
.legal a { padding: 0 6px; text-decoration: underline; text-underline-offset: 2px; }
.legal a + a { border-left: 1px solid #fff; }

/* map */
.map { position: relative; height: 200px; overflow: hidden; font-family: Roboto, "DejaVu Sans", sans-serif; background: #f6f8fa; }
.map-canvas { width: 100%; height: 100%; }
.road { fill: none; stroke-linejoin: round; }
.minor { stroke: #ccd2da; stroke-width: 1.2; }
.medium { stroke: #c0c5cd; stroke-width: 2.2; }
.major-edge { stroke: #7389ae; stroke-width: 4.4; }
.major { stroke: #a3b5d2; stroke-width: 2.6; }
.interchange { fill: none; stroke: #8196b9; stroke-width: 1.2; }
.map-canvas text { paint-order: stroke; stroke: #fff; stroke-width: 1; }
.map-canvas .shield text { stroke: none; font-size: 6px; font-weight: 500; fill: #404650; text-anchor: middle; }
.district text { font-size: 6px; font-weight: 500; letter-spacing: 1px; fill: #555d67; text-anchor: middle; }
.district-ar text { font: 6px "DejaVu Sans", sans-serif; fill: #666d76; text-anchor: middle; }
.street text { font-size: 8px; fill: #4b525c; }
.bend text { font-size: 7px; }
.poi text { font-size: 9px; }
.poi-ar text { font: 7px "DejaVu Sans", sans-serif; text-anchor: middle; }
.poi .end { text-anchor: end; }
.green { fill: #25906b; }
.pink { fill: #bd349f; }
.orange { fill: #cc6332; }
.blue { fill: #3e7fc9; }
.dark { fill: #4c5562; }
.google { font: 500 10px Roboto, sans-serif; }
.map-card { position: absolute; top: 7px; left: 7px; width: 201px; padding: 7px 12px 5px 8px; display: flex; justify-content: space-between; background: #fff; box-shadow: 0 1px 2px #0004; font-size: 8px; line-height: 10px; color: #666; }
.place { width: 138px; }
.map-card h2 { margin: 0 0 4px; color: #111; font-size: 9px; font-weight: 600; line-height: 11px; }
.map-card p { margin: 0 0 11px; line-height: 9px; }
.map-card a { color: #3576c4; }
.directions { display: flex; flex-direction: column; align-items: center; gap: 2px; padding-top: 1px; }
.directions svg { width: 13px; height: 14px; }
.satellite { position: absolute; left: 7px; bottom: 7px; width: 28px; height: 28px; border: 2px solid #fff; border-radius: 3px; box-shadow: 0 1px 3px #0006; overflow: hidden; }
.satellite svg { width: 24px; height: 24px; }
.pan { position: absolute; right: 8px; bottom: 17px; width: 25px; height: 25px; border-radius: 50%; background: #fff; box-shadow: 0 0 2px #0003; color: #555; }
.pan svg { width: 15px; height: 15px; }
.map-credits { position: absolute; bottom: 0; right: 0; display: flex; gap: 8px; font-size: 7px; line-height: 10px; color: #222; }
.watermark { position: absolute; right: 56px; top: 141px; width: 156px; display: flex; flex-direction: column; font: 13px/17px "Open Sans", sans-serif; color: #90909080; white-space: nowrap; pointer-events: none; }
.watermark small { font-size: 9px; line-height: 14px; }
.scrollbar { position: absolute; top: 0; right: 0; bottom: 0; width: 10px; display: flex; flex-direction: column; background: #2c2c2c; }
.scrollbar svg { width: 10px; height: 10px; fill: #a2a2a2; }
.scrollbar span { width: 6px; height: 87px; margin: auto 2px 1px; border-radius: 3px; background: #a2a2a2; }

/* taskbar */
.taskbar { position: relative; display: flex; align-items: center; justify-content: center; height: 32px; background: #000; color: #e8e8e8; }
.apps { display: flex; justify-content: space-between; width: 247px; }
.apps svg { width: 11px; height: 11px; }
.goal { position: absolute; left: 33%; right: 452px; top: 2px; height: 26px; display: flex; align-items: center; justify-content: space-between; padding: 0 5px; border: 2px solid #fff; background: linear-gradient(90deg, #ed0008 0 76px, transparent 76px); color: #fff; font-size: 15px; font-weight: 900; }
.goal-current { width: 20px; }
.goal-target { width: 20px; text-align: right; }
.tray { position: absolute; top: 0; right: 11px; height: 32px; display: flex; align-items: center; font-family: "Open Sans", "DejaVu Sans", sans-serif; font-size: 8px; }
.tray svg { width: 11px; height: 11px; }
.tray button { padding: 0 3px; }
.tray .more { padding-right: 8px; }
.tray .ime { padding: 0 13px; }
.tray time { padding: 0 3px 0 4px; line-height: 11px; text-align: right; }
```
